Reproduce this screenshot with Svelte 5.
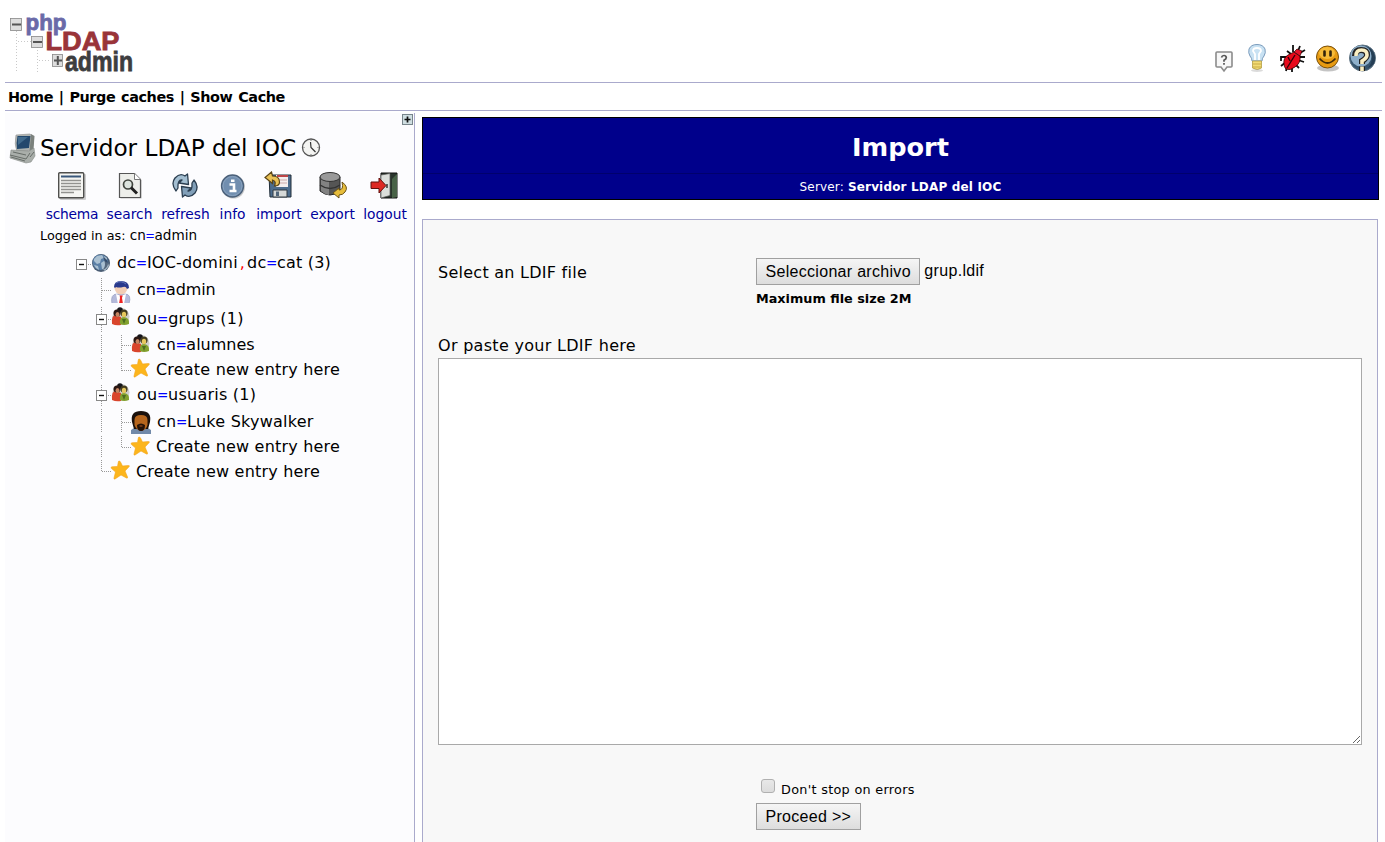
<script>
  const tools = ['schema', 'search', 'refresh', 'info', 'import', 'export', 'logout'];
  const rows = [
    { h: 27, x: 42, icon: 'globe', ix: 17, iy: 5, box: 7, by: 16, ls: 0.2, parts: [['dc', 'IOC-domini'], ['dc', 'cat (3)']] },
    { h: 27, x: 62, icon: 'admin', ix: 36, iy: 4, branch: 27, by: 15, ls: -0.12, parts: [['cn', 'admin']] },
    { h: 30, x: 62, icon: 'group', ix: 36, iy: 4, box: 27, by: 17, ls: 0.27, parts: [['ou', 'grups (1)']] },
    { h: 23, x: 82, icon: 'group', ix: 56, iy: 1, rail: 27, branch: 47, by: 13, ls: 0, parts: [['cn', 'alumnes']] },
    { h: 25, x: 81, icon: 'star', ix: 56, iy: 3, rail: 27, end: 47, by: 15, ls: 0.2, low: true, text: 'Create new entry here' },
    { h: 26, x: 62, icon: 'group', ix: 36, iy: 2, box: 27, by: 15, ls: 0.24, parts: [['ou', 'usuaris (1)']] },
    { h: 27, x: 82, icon: 'luke', ix: 56, iy: 4, rail: 27, branch: 47, by: 16, ls: 0.24, low: true, parts: [['cn', 'Luke Skywalker']] },
    { h: 24, x: 81, icon: 'star', ix: 56, iy: 3, rail: 27, end: 47, by: 14, ls: 0.2, text: 'Create new entry here' },
    { h: 25, x: 61, icon: 'star', ix: 36, iy: 3, end: 27, by: 14, ls: 0.2, low: true, text: 'Create new entry here' }
  ];
</script>

{#snippet globe()}
  <circle cx="9" cy="9" r="9" fill="#4a5d74" /><circle cx="8.4" cy="8.2" r="7.8" fill="#5b7fa6" />
  <path d="M2 5 5 2l5-1 2 3-3 1-1 4-3 1-3-3zM9 9l3-2 4 2 1 3-4 5-3-2zM12 2l3 2v2l-2-1zM2 11l4 1 1 4-3-2z" fill="#c4d6df" opacity=".75" />
  <path d="M11 3q5 2 5 7-1 5-6 6 3-2 3-6 0-4-2-7z" fill="#1c2c44" opacity=".6" />
{/snippet}
{#snippet admin()}
  <path d="M1 24q-2-10 5-10h8q7 0 4 10z" fill="#b4b9da" stroke="#8f95b8" stroke-width=".6" />
  <path d="m5 14 5 2 5-2-2 10H7z" fill="#fff" /><path d="M8.7 15.5h3L11 18l1 6H8l1-6z" fill="#e22" />
  <circle cx="10" cy="8" r="6.5" fill="#f1cdb5" /><path d="M3 7q0-6 7-6 8 0 8 7l-2 1q-1-3-4-2-4 1-7 0l-1 1z" fill="#29398d" />
  <path d="M5 3q5-3 10 1" stroke="#6377bb" fill="none" />
{/snippet}
{#snippet group()}
  <circle cx="10" cy="9.500" r="8.5" fill="#cfcfcd" />
  <path d="M1 17q-1-9 4-9l5 2v8q-5 1-9-1z" fill="#d9452c" /><path d="M9 17q-1-7 4-7 6 1 5 7-5 2-9 0z" fill="#82a12e" />
  <circle cx="9" cy="3" r="2.800" fill="#15151a" /><circle cx="6" cy="6" r="3.500" fill="#2b1712" /><ellipse cx="6.500" cy="7.500" rx="2" ry="2.500" fill="#c58360" />
  <circle cx="13" cy="6" r="3.600" fill="#433c20" /><ellipse cx="13" cy="7.500" rx="2.200" ry="2.700" fill="#e5c75c" /><path d="m11 12 2 5 2-5z" fill="#4c6c20" />
{/snippet}
{#snippet luke()}
  <path d="M0 24v-5q6-4 10-4t10 4v5z" fill="#7189a9" /><path d="M1 11Q-1 0 10 0t9 11l-2 7H3z" fill="#1a100b" />
  <path d="M3.500 9q0-5 6.500-5t6.500 5v5q-1 5-6.500 6-5-1-6.500-6z" fill="#b5651d" /><path d="M6 14q4-3 8 0 0 6-4 6t-4-6z" fill="#241208" /><ellipse cx="10" cy="15" rx="1.800" ry=".8" fill="#8d4518" />
{/snippet}
{#snippet star()}
  <path d="M8 0q1 0 1.500 1l2 4 6-.5q1.500 0 .5 1.300L14 10l2.500 6q.3 1.500-1 1L10 14l-6 4q-1.300.5-1-1l1.500-6L.3 7.300Q-.5 6 1 5.800l5.500-.3L7.300 1Q7.500 0 8 0z" fill="#fcb51c" stroke="#f1a21b" stroke-width=".6" />
{/snippet}

<div class="page">
  <header>
    <svg class="logo" width="140" height="82" viewBox="0 0 140 82">
      <g stroke="#bbb" stroke-dasharray="1 2" fill="none"><path d="M16.500 31v41M37.500 47v25M18 41.500h13M39 60.500h12" /></g>
      <g fill="#ddd" stroke="#888"><rect x="10.500" y="18.500" width="11" height="12" /><rect x="31.500" y="36.500" width="11" height="11" /><rect x="52.500" y="54.500" width="10" height="12" /></g>
      <path d="M12 24.500h9M33 42h9M54 60.500h8M57.800 56v9" stroke="#555" stroke-width="2" />
      <text x="25.500" y="29.500" font-size="22" textLength="41" lengthAdjust="spacingAndGlyphs" fill="#6a6aa8" stroke="#6a6aa8">php</text>
      <text x="45.500" y="49.500" font-size="26" textLength="74" lengthAdjust="spacingAndGlyphs" fill="#993439" stroke="#993439">LDAP</text>
      <text x="65" y="70.500" font-size="28.500" textLength="68" lengthAdjust="spacingAndGlyphs" fill="#3d3d3f" stroke="#3d3d3f">admin</text>
    </svg>
    <svg class="links" width="170" height="36" viewBox="1212 40 170 36">
      <path d="M1217 52h14q1 0 1 1v13q0 1-1 1h-4l-3 4-3-4h-4q-1 0-1-1V53q0-1 1-1z" fill="#f7f7f7" stroke="#8b8b8b" stroke-width="1.600" />
      <path d="M1221.500 57.500q.5-2 2.500-2t2.300 2q0 1.500-2.300 2.800v1.500m0 1.200v1.700" fill="none" stroke="#555" stroke-width="1.700" />
      <path d="M1252 61q0-3-2-5-2-3-1-7 2-4.500 8-4.500t8 4.500q1 4-1 7-2 2-2 5z" fill="#c9e2f3" stroke="#7b9cbd" />
      <path d="M1255 60v-6l-2-3q0-3 4-3t4 3l-2 3v6" fill="none" stroke="#fff" stroke-width="1.800" />
      <path d="M1252.500 61h9v7q-4 3-9 0z" fill="#f3dc75" stroke="#b39d42" stroke-width=".8" /><path d="M1253 64h8m-8 3h8" stroke="#c9ab45" /><ellipse cx="1257" cy="70.500" rx="6" ry="1.500" fill="#888" opacity=".3" />
      <path d="M1287 57h-6v4M1286 62l-5 4M1287 66l-1 5M1292 66v6M1295 64l4 4M1298 60l6 2M1299 57h6M1293 52v-7M1291 54l-4-3M1298 51l2-5M1300 53l5-3" stroke="#111" stroke-width="1.800" fill="none" />
      <path d="M1284 64q-1-6 4-9l6-3 6 4q1 7-5 11-5 4-9 2-2-2-2-5z" fill="#e8091b" stroke="#2a0000" stroke-width=".8" /><path d="m1287 68 8-13m-7 2 2 4" stroke="#350007" stroke-width="1.400" /><path d="m1294 52 3-3 5 2-2 5z" fill="#e6122a" stroke="#2a0000" stroke-width=".7" />
      <ellipse cx="1328" cy="68" rx="11" ry="3.500" fill="#555" opacity=".35" /><circle cx="1327.500" cy="57" r="11" fill="#e89b12" stroke="#79510d" /><ellipse cx="1327" cy="53" rx="8" ry="6" fill="#f6bb39" />
      <path d="M1324.500 51.500v4m6-4v4" stroke="#33230a" stroke-width="2.600" stroke-linecap="round" /><path d="M1319.500 58.500q8 9 16 0" fill="none" stroke="#432c08" stroke-width="1.800" />
      <circle cx="1362.500" cy="58" r="13" fill="#36556e" stroke="#5f7382" /><circle cx="1361" cy="56" r="10.500" fill="#8fb0ca" /><path d="M1368 47q8 11 0 21 8-3 7-11-1-7-7-10z" fill="#253e54" />
      <path d="M1355 56q0-6 6-6 6 0 6 5 0 3-5 6v3m0 2.500v4.500" fill="none" stroke="#222" stroke-width="6" /><path d="M1356 56q0-6 5.500-6 5.500 0 5.500 5 0 3-5 6v3m0 2.500v4.500" fill="none" stroke="#faefc2" stroke-width="3.600" />
    </svg>
  </header>
  <nav>Home | Purge caches | Show Cache</nav>
  <div class="body">
    <aside>
      <div class="expand"><svg width="11" height="11"><rect x=".5" y=".5" width="10" height="10" fill="#cfdee1" stroke="#78858b" /><path d="M2.500 5.500h6m-3-3v6" stroke="#111" stroke-width="1.700" /></svg></div>
      <div class="server">
        <svg width="28" height="32" viewBox="0 0 28 32"><path d="m7 3 14-1q3 1 2 5l-1 11-14 2q-3-8-1-17z" fill="#aeb3b0" stroke="#999" stroke-width=".7" /><path d="M8.500 4h13l-1.500 12-12 1q-1-6 .5-13z" fill="#23486d" /><path d="M9 5h10l-10 8z" fill="#416a8c" /><path d="m22 2 3.500 2-1 14-4 2z" fill="#7b817d" /><path d="m2 18 18 1 5-3 1 8-4 6-5 1-16-5z" fill="#a9aeaa" stroke="#858a86" stroke-width=".6" /><path d="m1 23 16 4 4-6M4 20l13 3M2 25l14 4m5-4 4-5" fill="none" stroke="#666c68" /></svg>
        <h1>Servidor LDAP del IOC</h1>
        <svg width="20" height="20" viewBox="0 0 20 20"><circle cx="10" cy="9.500" r="8.500" fill="#f4f4f2" stroke="#555" stroke-width="1.300" /><path d="m9.500 4 .5 5.500 4.500 4.500" fill="none" stroke="#333" stroke-width="1.200" /><path d="M10 2v1M10 16v1M2.500 9.500h1M16.500 9.500h1" stroke="#777" /></svg>
      </div>
      <div class="tools">
        {#each tools as t}
          <a class={t}>
            <svg width="30" height="30" viewBox="0 0 30 30">
              {#if t === 'schema'}
                <rect x="3" y="3" width="26" height="26" rx="1" fill="#bbb" opacity=".7" /><rect x="1.700" y="1.700" width="25" height="25" rx="1" fill="#f5f5f2" stroke="#4f4f4d" stroke-width="1.400" /><path d="M4 5.500h20" stroke="#39577b" stroke-width="2" /><path d="M4 9.500h20M4 12.500h20M4 15.500h20M4 18.500h20M4 21.500h13" stroke="#92928f" stroke-width="1.400" />
              {:else if t === 'search'}
                <path d="M5.500 3.500h15l6 6v18h-21z" fill="#bbb" /><path d="M4.500 2.500h15l6 6v18h-21z" fill="#edeeea" stroke="#555" stroke-width="1.200" /><path d="M19.500 2.500v6h6" fill="#fff" stroke="#777" /><circle cx="13" cy="13.500" r="4.500" fill="#dce4de" stroke="#40453e" stroke-width="1.700" /><path d="m16 16.500 6 6" stroke="#222" stroke-width="3" />
              {:else if t === 'refresh'}
                <path d="M5 20Q-.5 13 4 7q5-5.500 10-2l2.500-2 1 10.500-9.500-1.500 3-3Q6.500 8.500 7 17z" fill="#a3bed1" stroke="#2b3e50" stroke-width="1.300" stroke-linejoin="round" /><path d="M5 20Q-.5 13 4 7q5-5.500 10-2l2.500-2 1 10.500-9.500-1.500 3-3Q6.500 8.500 7 17z" transform="rotate(180 14 14.500)" fill="#819fb8" stroke="#2b3e50" stroke-width="1.300" stroke-linejoin="round" />
              {:else if t === 'info'}
                <circle cx="15.500" cy="16" r="11.500" fill="#aaa" opacity=".6" /><circle cx="14.500" cy="15" r="11" fill="#718eaf" stroke="#4b6079" stroke-width="1.300" /><circle cx="14.500" cy="15" r="9.500" fill="none" stroke="#89a2be" /><path d="M11.500 13.500H16V20m-4.500 0h7" fill="none" stroke="#fff" stroke-width="2.600" /><path d="M13 8.500h3.500V11H13z" fill="#fff" />
              {:else if t === 'import'}
                <path d="M5 4h22v22H6z" fill="#4d6c8d" stroke="#222e39" /><path d="M12 4h12v12H12z" fill="#f4eeee" /><path d="M13 5h11" stroke="#bc4548" stroke-width="2" /><path d="M14 9h9M14 12h9" stroke="#caa" /><path d="M9 19h14v7H9z" fill="#d6d9d8" stroke="#303941" /><path d="M12 20.500h3v4.500h-3z" fill="#52667a" /><path d="m7.500 1 1 4q7 0 7 6 0 4-5 4 2-5-2-6v3.500L1 6.500z" fill="#eac256" stroke="#5b4516" stroke-width="1.200" />
              {:else if t === 'export'}
                <path d="M2 6v14q10 8 20 0V6z" fill="#555" stroke="#292929" /><path d="M3 7v13q5 4 8 4V7z" fill="#828282" /><ellipse cx="12" cy="6" rx="10" ry="4.500" fill="#999" stroke="#333" /><path d="M2 14q10 7 20 0" fill="none" stroke="#333" stroke-width="1.400" /><path d="M24 11q7 5 3 10-2 3-6 3v3l-6-5 6-5v2q5 0 3-8z" fill="#e7bd3b" stroke="#6a5217" />
              {:else}
                <path d="M11 2h16v25H11z" fill="#29342c" stroke="#111" /><path d="m22 8 5-5v23l-5 1z" fill="#486247" /><path d="M11 4l9-1.500v22L11 27z" fill="#dbdeda" stroke="#555" stroke-width=".7" /><path d="M17 13v4" stroke="#333" stroke-width="1.500" /><path d="M1 11h8V7l7 7.500L9 22v-4.500H1z" fill="#dd2923" stroke="#60100d" />
              {/if}
            </svg>
            <span>{t}</span>
          </a>
        {/each}
      </div>
      <div class="login">Logged in as: <span class="who">cn<b>=</b>admin</span></div>
      <div class="tree">
        {#each rows as r}
          <div class="row" style="height:{r.h}px">
            <svg width={r.x} height={r.h} viewBox="0 0 {r.x} {r.h}">
              <g stroke="#999" stroke-dasharray="1 1" fill="none">
                {#if r.rail}<path d="M{r.rail - 0.5} 2v{r.h - 3}" />{/if}
                {#if r.branch}<path d="M{r.branch - 0.5} 2v{r.h - 4}M{r.branch} {r.by - 0.5}h9" />{/if}
                {#if r.end}<path d="M{r.end - 0.5} 2v{r.by - 2}M{r.end} {r.by - 0.5}h9" />{/if}
                {#if r.box}<path d="M{r.box + 6} {r.by - 0.5}h4" />{#if r.box > 7}<path d="M{r.box - 0.5} 4v{r.h - 5}" />{/if}{/if}
              </g>
              {#if r.box}<rect x={r.box - 5.5} y={r.by - 5.5} width="10" height="10" fill="#fff" stroke="#888" /><path d="M{r.box - 3} {r.by - 0.5}h5" stroke="#111" stroke-width="1.400" />{/if}
              <g transform="translate({r.ix} {r.iy})">
                {#if r.icon === 'globe'}{@render globe()}{:else if r.icon === 'admin'}{@render admin()}{:else if r.icon === 'group'}{@render group()}{:else if r.icon === 'luke'}{@render luke()}{:else}{@render star()}{/if}
              </g>
            </svg>
            <span class:low={r.low} style="letter-spacing:{r.ls}px">{#if r.text}{r.text}{:else}{#each r.parts as p, i}{#if i}<i>,</i>{/if}{p[0]}<b>=</b>{p[1]}{/each}{/if}</span>
          </div>
        {/each}
      </div>
    </aside>
    <main>
      <div class="title"><h2>Import</h2><p>Server: <b>Servidor LDAP del IOC</b></p></div>
      <section>
        <div class="file">
          <label for="ldif">Select an LDIF file</label>
          <div><div class="pick"><button>Seleccionar archivo</button><span>grup.ldif</span></div><strong>Maximum file size 2M</strong></div>
        </div>
        <div class="paste">Or paste your LDIF here</div>
        <textarea id="ldif"></textarea>
        <div class="submit">
          <label><input type="checkbox" /><span>Don't stop on errors</span></label>
          <button>Proceed &gt;&gt;</button>
        </div>
      </section>
    </main>
  </div>
</div>

<style>
  :global(body) { margin: 0; background: #fff; }
  * { box-sizing: border-box; }
  svg { display: block; flex: none; }
  .page { width: 1385px; height: 842px; overflow: hidden; padding: 0 3px 0 5px; font-family: "DejaVu Sans", Verdana, sans-serif; font-size: 16px; color: #000; display: flex; flex-direction: column; }
  header { height: 83px; border-bottom: 1px solid #aac; display: flex; justify-content: space-between; }
  .logo { margin-left: -5px; overflow: visible; font-family: "Liberation Sans", Arial, sans-serif; font-weight: bold; stroke-width: .8; }
  .links { margin-top: 40px; }
  nav { height: 28px; border-bottom: 1px solid #aac; padding-left: 3px; line-height: 29px; font-size: 14.400px; letter-spacing: -.42px; word-spacing: 1.200px; font-weight: bold; white-space: nowrap; }
  .body { flex: 1; display: flex; min-height: 0; }
  aside { width: 410px; margin-top: 2px; background: #fcfcfe; border-right: 1px solid #aac; white-space: nowrap; }
  .expand { height: 19px; padding-top: 1px; display: flex; justify-content: flex-end; padding-right: 1px; }
  .server { height: 32px; display: flex; align-items: center; padding-left: 4px; }
  h1 { margin: 0 5px 2px 3px; width: 256px; font-size: 23.200px; font-weight: normal; }
  .tools { display: grid; grid-template-columns: 52px 45px 49px 26px 45px 44px 43px; gap: 9px; padding: 7px 0 0 41px; height: 62px; }
  .tools a { display: flex; flex-direction: column; align-items: center; font-size: 13.800px; color: #00009c; line-height: 24px; }
  .tools .schema { letter-spacing: -.25px; }
  .tools a svg { margin-bottom: 1px; }
  .tools .import, .tools .export, .tools .logout { padding-left: 3px; margin-right: -2px; }
  .tools .info { padding-left: 1px; }
  .login { font-size: 12.800px; height: 23px; line-height: 18px; padding-left: 35px; }
  .who { font-size: 13.600px; }
  aside b { color: #00f; font-weight: normal; font-size: .85em; margin: 0 -.5px; }
  aside i { color: #f00; font-style: normal; margin: 0 2px; }
  .tree { padding-left: 70px; }
  .row { display: flex; align-items: center; }
  .row .low { padding-top: 1px; }
  main { flex: 1; padding: 6px 3px 0 7px; display: flex; flex-direction: column; }
  .title { height: 83px; background: #00008b; border: 1px solid #000; color: #fff; text-align: center; }
  h2 { margin: 0; height: 56px; line-height: 59px; font-size: 25.600px; border-bottom: 1px solid #00006c; }
  .title p { margin: 0; font-size: 12px; line-height: 26px; letter-spacing: .17px; }
  section { flex: 1; margin: 19px 1px 0 0; background: #f8f8f8; border: 1px solid #aac; border-bottom: 0; padding: 38px 15px 0; }
  .file { display: grid; grid-template-columns: 318px 1fr; height: 76px; }
  .file label { line-height: 29px; letter-spacing: .26px; }
  .pick { display: flex; gap: 4px; line-height: 25px; font-family: "Liberation Sans", Arial, sans-serif; letter-spacing: .32px; }
  button { height: 27px; border: 1px solid #a0a0a0; border-radius: 0; background: linear-gradient(#f5f5f5, #ddd); font: 16px "Liberation Sans", Arial, sans-serif; letter-spacing: .3px; padding: 0 8.500px; color: #000; }
  .file strong { font-size: 12.800px; line-height: 28px; display: block; width: max-content; }
  .paste { line-height: 24px; height: 24px; letter-spacing: .3px; }
  textarea { display: block; width: 924px; height: 387px; border: 1px solid #a9a9a9; margin: 0; }
  .submit { padding: 31px 0 0 318px; }
  .submit label { display: flex; height: 27px; line-height: 28px; font-size: 12.800px; letter-spacing: .3px; }
  .submit input { appearance: none; width: 14px; height: 14px; border: 1px solid #b0b0b0; border-radius: 3px; background: linear-gradient(#e8e8e8, #dcdcdc); margin: 3px 6px 0 5px; }
</style>
